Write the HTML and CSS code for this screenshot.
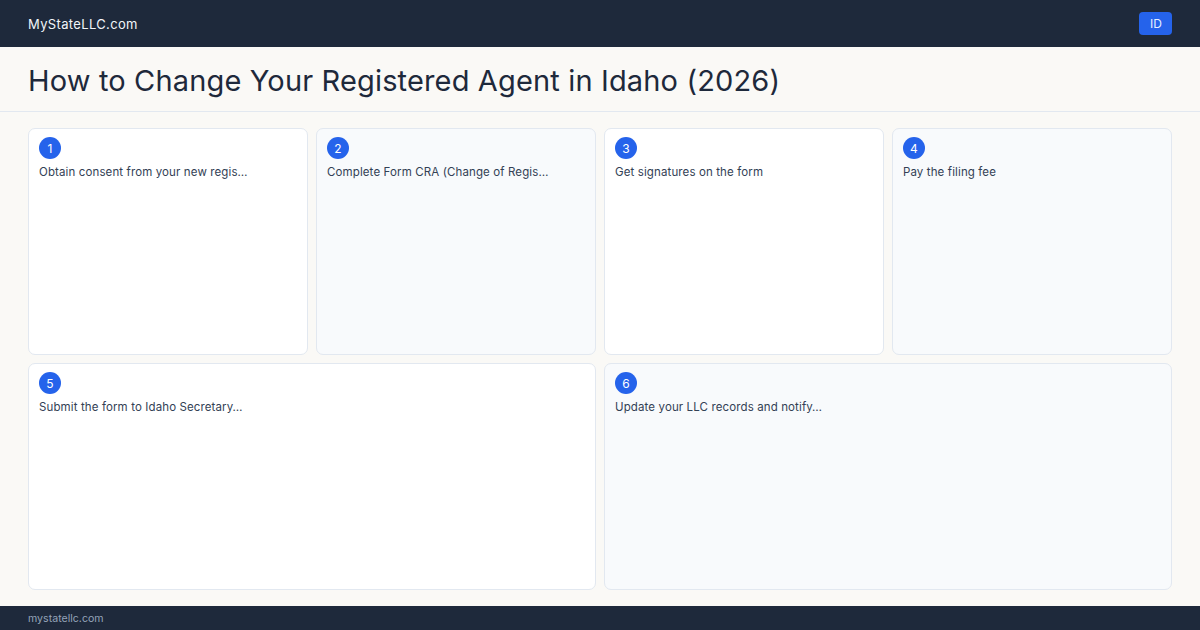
FILE: index.html
```html
<!DOCTYPE html>
<html lang="en">
<head>
<meta charset="utf-8">
<title>How to Change Your Registered Agent in Idaho (2026)</title>
<link rel="stylesheet" href="styles.css">
</head>
<body>
<div class="page">
  <header class="topbar">
    <span class="brand">MyStateLLC.com</span>
    <span class="state-badge">ID</span>
  </header>
  <section class="title-bar">
    <h1 class="title">How to Change Your Registered Agent in Idaho (2026)</h1>
  </section>
  <main class="steps">
    <div class="step">
      <span class="step-num">1</span>
      <p class="step-text">Obtain consent from your new regis…</p>
    </div>
    <div class="step alt">
      <span class="step-num">2</span>
      <p class="step-text">Complete Form CRA (Change of Regis…</p>
    </div>
    <div class="step">
      <span class="step-num">3</span>
      <p class="step-text">Get signatures on the form</p>
    </div>
    <div class="step alt">
      <span class="step-num">4</span>
      <p class="step-text">Pay the filing fee</p>
    </div>
    <div class="step wide">
      <span class="step-num">5</span>
      <p class="step-text">Submit the form to Idaho Secretary…</p>
    </div>
    <div class="step alt wide">
      <span class="step-num">6</span>
      <p class="step-text">Update your LLC records and notify…</p>
    </div>
  </main>
  <footer class="footer">
    <span class="footer-url">mystatellc.com</span>
  </footer>
</div>
</body>
</html>
```

FILE: styles.css
```css
* {
  box-sizing: border-box;
}

html, body {
  margin: 0;
  padding: 0;
}

body {
  font-family: Inter, "Noto Sans", "Liberation Sans", sans-serif;
  color: #1e293b;
  background: #faf9f6;
}

.page {
  width: 1200px;
  height: 630px;
  display: flex;
  flex-direction: column;
}

.topbar {
  height: 47px;
  flex: none;
  background: #1e293b;
  display: flex;
  align-items: center;
  justify-content: space-between;
  padding: 0 28px;
}

.brand {
  color: #f1f5f9;
  font-size: 13px;
  letter-spacing: 0.35px;
}

.state-badge {
  background: #2563eb;
  color: #e8efff;
  font-size: 12px;
  line-height: 23px;
  height: 23px;
  padding: 0 10px 0 11px;
  border-radius: 4px;
}

.title-bar {
  height: 65px;
  flex: none;
  border-bottom: 1px solid #e2e8f0;
  display: flex;
  align-items: center;
  padding: 0 28px;
}

.title {
  margin: 2px 0 0;
  font-size: 29px;
  font-weight: 400;
  color: #1e293b;
  letter-spacing: 0.15px;
}

.steps {
  flex: 1;
  display: grid;
  grid-template-columns: repeat(4, 1fr);
  grid-template-rows: repeat(2, 1fr);
  gap: 8px;
  padding: 16px 28px;
  min-height: 0;
}

.step {
  background: #ffffff;
  border: 1px solid #e2e8f0;
  border-radius: 7px;
  padding: 8px 10px;
}

.step.alt {
  background: #f8fafc;
}

.step.wide {
  grid-column: span 2;
}

.step-num {
  display: flex;
  align-items: center;
  justify-content: center;
  width: 22px;
  height: 22px;
  border-radius: 50%;
  background: #2563eb;
  color: #ffffff;
  font-size: 12px;
}

.step-text {
  margin: 5px 0 0;
  font-size: 11.5px;
  line-height: 16px;
  letter-spacing: 0.12px;
  color: #334155;
}

.footer {
  height: 24px;
  flex: none;
  background: #1e293b;
  display: flex;
  align-items: center;
  padding: 0 28px;
}

.footer-url {
  color: #94a3b8;
  font-size: 10.6px;
}
```
